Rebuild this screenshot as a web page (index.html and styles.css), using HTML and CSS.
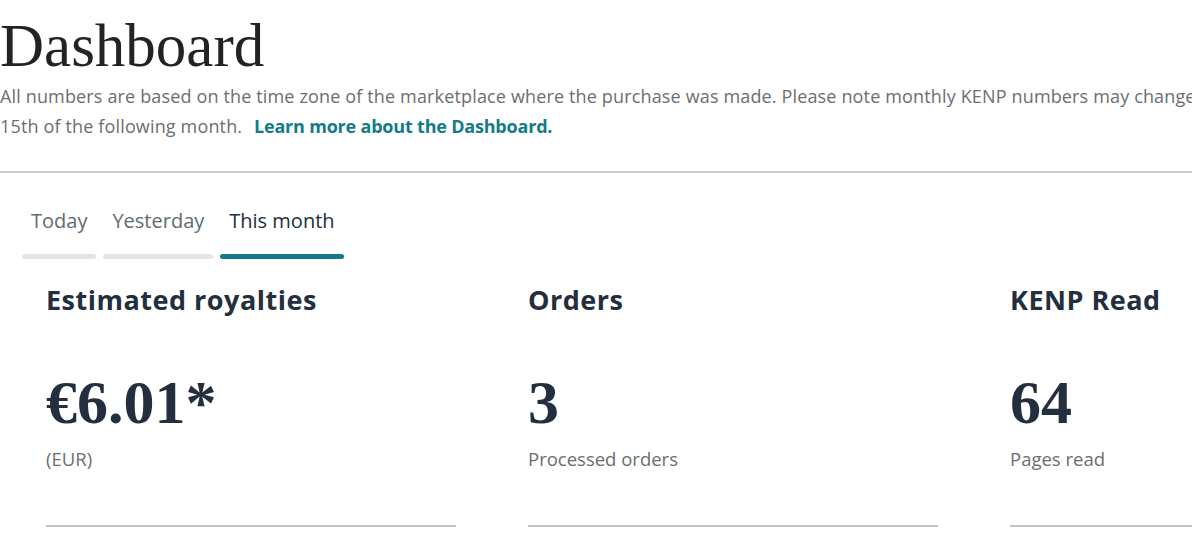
FILE: index.html
```html
<!DOCTYPE html>
<html lang="en">
<head>
<meta charset="utf-8">
<title>Dashboard</title>
<link rel="stylesheet" href="styles.css">
</head>
<body>
<main class="page">
  <header class="intro">
    <h1 class="title">Dashboard</h1>
    <p class="note">All numbers are based on the time zone of the marketplace where the purchase was made. Please note monthly KENP numbers may change until the 15th of the following month. <a class="learn" href="#">Learn more about the Dashboard.</a></p>
  </header>
  <hr class="divider">
  <nav class="tabs">
    <a class="tab" href="#">Today</a>
    <a class="tab" href="#">Yesterday</a>
    <a class="tab active" href="#">This month</a>
  </nav>
  <section class="cards">
    <div class="card">
      <h2 class="card-title">Estimated royalties</h2>
      <div class="card-value">€6.01*</div>
      <div class="card-sub">(EUR)</div>
    </div>
    <div class="card">
      <h2 class="card-title">Orders</h2>
      <div class="card-value">3</div>
      <div class="card-sub">Processed orders</div>
    </div>
    <div class="card">
      <h2 class="card-title">KENP Read</h2>
      <div class="card-value">64</div>
      <div class="card-sub">Pages read</div>
    </div>
  </section>
</main>
</body>
</html>
```

FILE: styles.css
```css
html, body {
  margin: 0;
  padding: 0;
  background: #ffffff;
  overflow: hidden;
}

.page {
  width: 1420px;
  font-family: "Open Sans", "Noto Sans", sans-serif;
  color: #232f3e;
}

.intro {
  padding-top: 11px;
  width: 1285px;
}

.title {
  margin: 0;
  font-family: "Liberation Serif", "Times New Roman", serif;
  font-weight: 400;
  font-size: 61px;
  line-height: 70px;
  color: #232323;
}

.note {
  margin: 0;
  font-size: 18px;
  line-height: 30px;
  letter-spacing: 0.15px;
  color: #6c6e70;
}

.learn {
  color: #137b87;
  font-weight: 700;
  letter-spacing: -0.2px;
  text-decoration: none;
  margin-left: 7px;
}

.divider {
  margin: 30px 0 0;
  width: 1192px;
  border: 0;
  border-top: 2px solid #cfcfcf;
}

.tabs {
  display: flex;
  gap: 7px;
  padding: 36px 0 0 22px;
}

.tab {
  display: flex;
  flex-direction: column;
  padding: 0 9px;
  font-size: 20px;
  line-height: 24px;
  color: #5f6b70;
  text-decoration: none;
}

.tab::after {
  content: "";
  display: block;
  height: 5px;
  margin: 21px -9px 0;
  border-radius: 3px;
  background: #e4e4e4;
}

.tab.active {
  color: #232f3e;
}

.tab.active::after {
  background: #127a87;
}

.cards {
  display: grid;
  grid-template-columns: repeat(3, 410px);
  column-gap: 72px;
  padding: 25px 0 0 46px;
}

.card {
  border-bottom: 2px solid #c3c3c3;
  padding-bottom: 54px;
}

.card-title {
  margin: 0;
  font-size: 27px;
  line-height: 32px;
  letter-spacing: 0.5px;
  font-weight: 700;
  color: #232f3e;
}

.card-value {
  margin-top: 51px;
  font-family: "Liberation Serif", "Times New Roman", serif;
  font-weight: 700;
  font-size: 62px;
  line-height: 70px;
  color: #232f3e;
}

.card-sub {
  margin-top: 10px;
  font-size: 18.5px;
  line-height: 24px;
  color: #6c6e70;
}
```
